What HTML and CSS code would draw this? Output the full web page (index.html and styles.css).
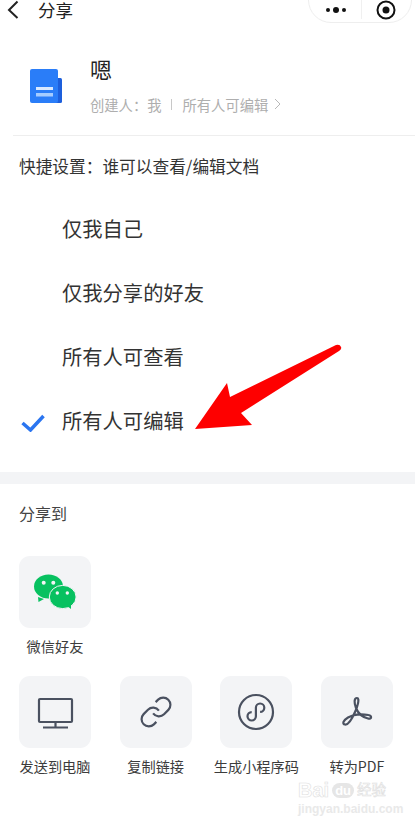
FILE: index.html
```html
<!DOCTYPE html>
<html lang="zh-CN">
<head>
  <meta charset="UTF-8" />
  <title>分享</title>
  <link rel="stylesheet" href="styles.css">
</head>
<body>
  <div class="page">

    <header class="topbar">
      <svg class="back" width="12" height="20" viewBox="0 0 12 20"><path d="M10.5 1.5L2 10l8.500 8" /></svg>
      <span class="title">分享</span>
      <div class="capsule">
        <svg width="22" height="6" viewBox="0 0 22 6"><circle cx="3" cy="3" r="2" /><circle cx="11" cy="3" r="3" /><circle cx="19" cy="3" r="2" /></svg>
        <span class="capsule-line"></span>
        <svg width="20" height="20" viewBox="0 0 20 20"><circle class="ring" cx="10" cy="10" r="8.500" /><circle cx="10" cy="10" r="3.500" /></svg>
      </div>
    </header>

    <section class="doc">
      <svg class="doc-icon" width="32" height="35" viewBox="0 0 32 35">
        <rect x="20" y="9" width="12" height="25" rx="1.500" fill="#1d5fdc" />
        <rect x="0" y="0" width="28" height="34" rx="2" fill="#2a7df8" />
        <rect x="6" y="18" width="17" height="3" fill="#d8e8ff" />
        <rect x="6" y="24" width="17" height="3.500" fill="#a5ccff" />
      </svg>
      <div class="doc-info">
        <div class="doc-name">嗯</div>
        <div class="doc-meta">
          <span>创建人&#xFF1A;我</span>
          <span class="meta-line"></span>
          <span>所有人可编辑</span>
          <svg width="7" height="12" viewBox="0 0 7 12"><path d="M1 1l5 5-5 5" /></svg>
        </div>
      </div>
    </section>

    <h2 class="quick-title">快捷设置&#xFF1A;谁可以查看/编辑文档</h2>

    <ul class="options">
      <li>仅我自己</li>
      <li>仅我分享的好友</li>
      <li>所有人可查看</li>
      <li>
        <svg class="check" width="24" height="18" viewBox="0 0 24 18"><path d="M1.500 9l8 7L22.500 2" /></svg>
        所有人可编辑
      </li>
    </ul>

    <div class="band"></div>

    <section class="share">
      <h2 class="share-title">分享到</h2>
      <div class="share-grid">
        <div class="share-item">
          <div class="tile">
            <svg width="72" height="72" viewBox="0 0 72 72">
              <ellipse cx="29.500" cy="30.500" rx="14.500" ry="12" fill="#07c160" />
              <path d="M19 41l.5 5 5.500-3z" fill="#07c160" />
              <ellipse cx="43.700" cy="41" rx="13.400" ry="11.600" fill="#07c160" stroke="#f3f4f6" stroke-width="1" />
              <path d="M48 50l4 3 0-5z" fill="#07c160" />
              <circle cx="24.700" cy="26.700" r="2" fill="#f3f4f6" />
              <circle cx="34.300" cy="26.700" r="2" fill="#f3f4f6" />
              <circle cx="38.300" cy="37" r="1.700" fill="#f3f4f6" />
              <circle cx="48.300" cy="37" r="1.700" fill="#f3f4f6" />
            </svg>
          </div>
          <div class="share-label">微信好友</div>
        </div>
        <div class="share-item empty"></div>
        <div class="share-item empty"></div>
        <div class="share-item empty"></div>

        <div class="share-item">
          <div class="tile">
            <svg class="line-icon" width="72" height="72" viewBox="0 0 72 72">
              <rect x="20" y="23" width="33" height="23" rx="1" />
              <path d="M36.500 46v5M24 51.500h25" />
            </svg>
          </div>
          <div class="share-label">发送到电脑</div>
        </div>
        <div class="share-item">
          <div class="tile">
            <svg class="line-icon" width="72" height="72" viewBox="0 0 72 72">
              <g transform="translate(18.600 18.600) scale(1.450)">
                <path class="thin" d="M10 13a5 5 0 0 0 7.540.54l3-3a5 5 0 0 0-7.070-7.070l-1.720 1.710" />
                <path class="thin" d="M14 11a5 5 0 0 0-7.540-.54l-3 3a5 5 0 0 0 7.070 7.070l1.710-1.710" />
              </g>
            </svg>
          </div>
          <div class="share-label">复制链接</div>
        </div>
        <div class="share-item">
          <div class="tile">
            <svg class="line-icon" width="72" height="72" viewBox="0 0 72 72">
              <circle cx="36" cy="36" r="17" />
              <path d="M31.700 36.100a4.200 4.200 0 1 0 4.200 4.200V31.700a4.200 4.200 0 1 1 4.200 4.200" />
            </svg>
          </div>
          <div class="share-label">生成小程序码</div>
        </div>
        <div class="share-item">
          <div class="tile">
            <svg class="line-icon" width="72" height="72" viewBox="0 0 72 72">
              <path d="M36 22C33 22 33 27 35 32C37 37 41 41 47 42.500C51 43.500 51 39.500 47.500 39C42 38 33 38 27 41.500C22 44.500 21 48 24 48.500C27 49 31 43 34 36C36.500 31 39 22 36 22Z" />
            </svg>
          </div>
          <div class="share-label">转为PDF</div>
        </div>
      </div>
    </section>

    <!-- annotation drawn over the screenshot -->
    <svg class="arrow" width="415" height="824" viewBox="0 0 415 824">
      <path d="M195 429L227 383L230 397L336 345Q340 344 341 347Q342 349 339 351L241 413L252 425Z" fill="#fe0000" />
    </svg>

    <div class="watermark">
      <div class="wm-logo">
        <span>Bai</span>
        <span class="wm-du">du</span>
        <span class="wm-cn">经验</span>
      </div>
      <div class="wm-url">jingyan.baidu.com</div>
    </div>
  </div>
</body>
</html>
```

FILE: styles.css
```css
* {
  box-sizing: border-box;
}
body {
  margin: 0;
  background: #fff;
  color: #222;
  font-family: "Noto Sans CJK SC", "Noto Sans", sans-serif;
}
.page {
  position: relative;
  width: 415px;
  height: 824px;
  overflow: hidden;
}

.topbar {
  display: flex;
  align-items: center;
  height: 20px;
  padding: 0 3px 0 7px;
}
.back {
  margin-right: 19px;
}
.back path {
  fill: none;
  stroke: #222;
  stroke-width: 2;
}
.title {
  font-size: 17.500px;
  line-height: 20px;
}
.capsule {
  display: flex;
  align-items: center;
  justify-content: space-between;
  width: 104px;
  height: 46px;
  margin: -20px 0 0 auto;
  padding: 20px 15px 0 16px;
  border: 1px solid #eeeeee;
  border-radius: 23px;
  background: #fff;
}
.capsule svg circle {
  fill: #111;
}
.capsule svg circle.ring {
  fill: none;
  stroke: #111;
  stroke-width: 2;
}
.capsule-line {
  width: 1px;
  height: 20px;
  margin-top: -2px;
  background: #f0f0f0;
}

.doc {
  display: flex;
  margin-left: 13px;
  padding: 37px 0 21px 17px;
  border-bottom: 1px solid #eeeeee;
}
.doc-icon {
  margin: 12px 28px 0 0;
}
.doc-name {
  font-size: 22px;
  line-height: 22px;
}
.doc-meta {
  display: flex;
  align-items: center;
  height: 20px;
  margin-top: 15px;
  font-size: 14.300px;
  color: #aeaeae;
}
.doc-meta path {
  fill: none;
  stroke: #b8b8b8;
  stroke-width: 1;
}
.doc-meta svg {
  margin-left: 6px;
}
.meta-line {
  width: 1px;
  height: 11px;
  margin: 0 10px;
  background: #c8c8c8;
}

.quick-title {
  margin: 17px 0 0 19px;
  font-size: 16.700px;
  font-weight: normal;
  line-height: 26px;
  color: #333;
}

.options {
  margin: 19px 0 0;
  padding: 0 0 0 62px;
  list-style: none;
}
.options li {
  position: relative;
  height: 64px;
  font-size: 20.300px;
  line-height: 60px;
  color: #333;
}
.check {
  position: absolute;
  left: -41px;
  top: 24px;
}
.check path {
  fill: none;
  stroke: #2a75f0;
  stroke-width: 3.500;
}

.band {
  height: 12px;
  margin-top: 18px;
  background: #f3f4f6;
}

.share {
  padding: 17px 0 0 19px;
}
.share-title {
  margin: 0;
  font-size: 16px;
  font-weight: normal;
  line-height: 24px;
  color: #444;
}
.share-grid {
  display: grid;
  grid-template-columns: repeat(4, 72px);
  column-gap: 28.670px;
  row-gap: 20px;
  margin-top: 31px;
}
.share-item {
  display: flex;
  flex-direction: column;
  align-items: center;
}
.tile {
  width: 72px;
  height: 72px;
  border-radius: 11px;
  background: #f3f4f6;
}
.tile svg {
  display: block;
}
.share-label {
  margin-top: 8px;
  font-size: 14.200px;
  line-height: 20px;
  white-space: nowrap;
  color: #3c3c3c;
}
.line-icon * {
  fill: none;
  stroke: #4a5160;
  stroke-width: 2.200;
}
.line-icon .thin {
  stroke-width: 1.500;
}
.line-icon g {
  stroke: none;
}

.arrow {
  position: absolute;
  left: 0;
  top: 0;
  pointer-events: none;
}

.watermark {
  position: absolute;
  left: 298px;
  top: 779px;
  width: 92px;
  font-family: "Liberation Sans", "Noto Sans CJK SC", sans-serif;
  white-space: nowrap;
}
.wm-logo {
  display: flex;
  align-items: center;
  gap: 3px;
  font-size: 20px;
  font-weight: bold;
  line-height: 22px;
  color: #fff;
  -webkit-text-stroke: 0.6px #e0e0e0;
}
.wm-du {
  padding: 0 3px;
  border-radius: 8px;
  font-size: 13px;
  line-height: 15px;
  color: #fff;
  background: #e6e6e6;
  -webkit-text-stroke: 0;
}
.wm-cn {
  font-size: 14.500px;
  font-weight: normal;
}
.wm-url {
  margin-top: 1px;
  font-size: 12px;
  font-weight: bold;
  line-height: 14px;
  color: #e9e9e9;
}
```
